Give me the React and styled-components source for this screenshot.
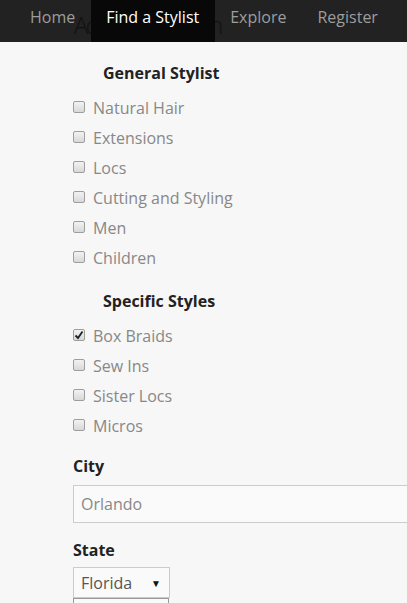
import React from "react";
import styled, { createGlobalStyle } from "styled-components";

const Global = createGlobalStyle`
  html, body { margin: 0; padding: 0; background: #f7f7f7; overflow: hidden; }
  body { font-family: "Open Sans", "Liberation Sans", sans-serif; }
  * { box-sizing: border-box; }
`;

const Page = styled.div`
  position: relative;
  width: 407px;
  height: 603px;
  overflow: hidden;
`;

const Nav = styled.nav`
  height: 42px;
  background: #222;
  display: flex;
  padding-left: 15px;
  position: relative;
`;

const NavItem = styled.a`
  position: relative;
  z-index: ${(p) => (p.$active ? 3 : 1)};
  display: flex;
  align-items: center;
  padding: 0 16px 8px 15px;
  height: 42px;
  font-size: 16px;
  color: ${(p) => (p.$active ? "#fff" : "#9d9d9d")};
  background: ${(p) => (p.$active ? "#080808" : "transparent")};
  text-decoration: none;
`;

const Overlap = styled.h1`
  position: absolute;
  z-index: 2;
  left: 74px;
  top: 8px;
  margin: 0;
  font-size: 24px;
  font-weight: 300;
  color: #111;
  letter-spacing: -2.6px;
  white-space: nowrap;
`;

const Content = styled.div`
  padding: 20px 0 0 73px;
`;

const GroupTitle = styled.h4`
  margin: 0 0 9px 30px;
  font-size: 16px;
  font-weight: 700;
  color: #222;
  line-height: 22px;
`;

const Group = styled.div`
  display: flex;
  flex-direction: column;
  margin-bottom: ${(p) => p.$gap || 17}px;
`;

const Row = styled.label`
  display: flex;
  align-items: center;
  height: 30px;
  font-size: 16px;
  color: #888;
  gap: 8px;
`;

const Box = styled.span`
  width: 12px;
  height: 12px;
  border: 1px solid #9e9e9e;
  border-radius: 2px;
  background: linear-gradient(#f2f2f2, #d8d8d8);
  display: flex;
  align-items: center;
  justify-content: center;
  margin-top: -2px;
`;

const FieldLabel = styled.div`
  font-size: 16px;
  font-weight: 700;
  color: #222;
  line-height: 22px;
  margin-bottom: ${(p) => p.$gap || 8}px;
`;

const TextInput = styled.div`
  width: 400px;
  height: 38px;
  border: 1px solid #ccc;
  background: #fafafa;
  display: flex;
  align-items: center;
  padding-left: 7px;
  font-size: 16px;
  color: #888;
  margin-bottom: 16px;
`;

const Select = styled.div`
  width: 97px;
  height: 31px;
  border: 1px solid #ccc;
  background: #fafafa;
  display: flex;
  align-items: center;
  justify-content: space-between;
  padding: 0 8px 0 7px;
  font-size: 16px;
  color: #555;
`;

const Arrow = styled.span`
  font-size: 10px;
  color: #111;
`;

const Below = styled.div`
  width: 96px;
  height: 20px;
  border: 1px solid #999;
  border-bottom: none;
  background: #fafafa;
`;

const Check = ({ checked }) => (
  <Box>
    {checked && (
      <svg width="10" height="10" viewBox="0 0 10 10">
        <path d="M1.5 5.5 L4 8 L8.5 1.5" stroke="#222" strokeWidth="1.8" fill="none" />
      </svg>
    )}
  </Box>
);

const general = ["Natural Hair", "Extensions", "Locs", "Cutting and Styling", "Men", "Children"];
const specific = [["Box Braids", true], ["Sew Ins"], ["Sister Locs"], ["Micros"]];

export default function App() {
  return (
    <Page>
      <Global />
      <Nav>
        <NavItem>Home</NavItem>
        <NavItem $active>Find a Stylist</NavItem>
        <NavItem>Explore</NavItem>
        <NavItem>Register</NavItem>
        <Overlap>Advanced Search</Overlap>
      </Nav>
      <Content>
        <GroupTitle>General Stylist</GroupTitle>
        <Group>
          {general.map((g) => (
            <Row key={g}>
              <Check />
              {g}
            </Row>
          ))}
        </Group>
        <GroupTitle>Specific Styles</GroupTitle>
        <Group $gap={14}>
          {specific.map(([s, c]) => (
            <Row key={s}>
              <Check checked={c} />
              {s}
            </Row>
          ))}
        </Group>
        <FieldLabel>City</FieldLabel>
        <TextInput>Orlando</TextInput>
        <FieldLabel $gap={6}>State</FieldLabel>
        <Select>
          Florida <Arrow>▼</Arrow>
        </Select>
        <Below />
      </Content>
    </Page>
  );
}
